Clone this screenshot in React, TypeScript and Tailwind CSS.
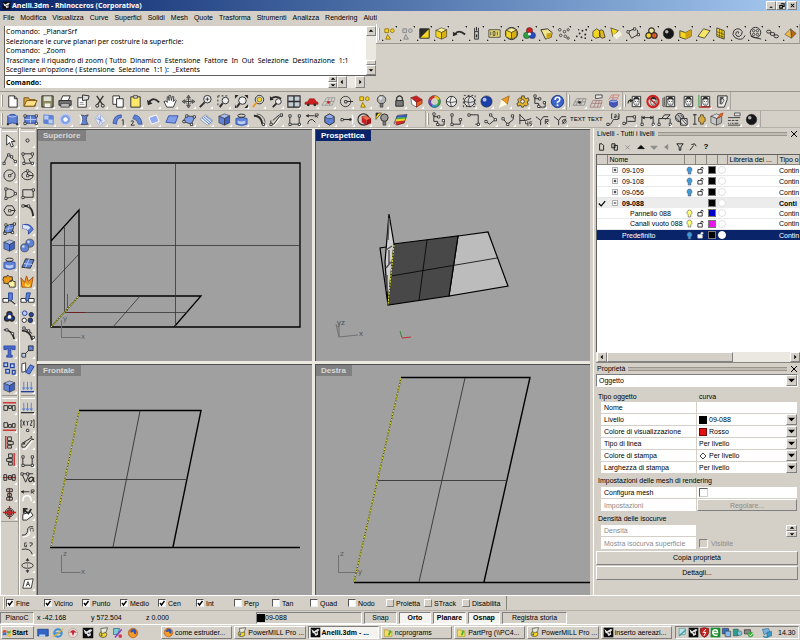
import { useState } from 'react';

type Shape = { d: string; fill: string; stroke: string; w: number };

const K = '#2b2b2b';
const G = '#8a8a8a';
const B = '#5f82d4';
const L = '#bccdf3';
const D = '#24429c';
const Y = '#f4d51f';
const O = '#f09a1c';
const R = '#cc2020';
const W = '#ffffff';

const s = (d: string, stroke = K, w = 1): Shape => ({ d, fill: 'none', stroke, w });
const f = (d: string, fill = K, stroke = 'none', w = 1): Shape => ({ d, fill, stroke, w });
const box = (x: number, y: number, w: number, h: number) => `M${x} ${y}h${w}v${h}h${-w}z`;
const circ = (x: number, y: number, r: number, ry = r) =>
  `M${x - r} ${y}a${r} ${ry} 0 1 0 ${2 * r} 0a${r} ${ry} 0 1 0 ${-2 * r} 0z`;
const nodes = (...p: number[][]) => f(p.map(([x, y]) => box(x - 1, y - 1, 2.4, 2.4)).join(''), W, K, 0.9);
const ball = (x: number, y: number, r: number, c: string) => [
  f(circ(x, y, r), c, K, 0.6),
  f(circ(x - r / 3, y - r / 3, r / 3), '#ffffffb0'),
];
const cube = (top: string, left: string, right: string) => [
  f('M2 4.500L8 2l5.500 2L8 7z', top, K, 0.6),
  f('M2 4.500L8 7v7l-6-2.500z', left, K, 0.6),
  f('M8 7l5.500-3v7.500L8 14z', right, K, 0.6),
];
const face = (bg = W) => [
  f(box(4.5, 2.5, 9, 11), bg, K, 1),
  f(circ(9, 8.5, 3, 4), '#f4f4f4', K, 0.7),
  f('M5.500 7q0-4 3.500-4t3.500 4l-1.500-1.500H7z'),
  s('M7.300 8h1.200M9.800 8h1.200M8 10.800h2', K, 0.8),
];
const tag = f('M7 1l7 0v3l-7 1z', '#e8e8e8', K, 0.8);

const icons: Record<string, Shape[]> = {
  // files and view
  new: [f('M4 2h6l3 3v9H4z', W, K), s('M10 2v3h3')],
  open: [f('M1 4h5l1 2h6v7H1z', '#d9a441', '#7a5510'), f('M1 13l3-6h11l-3 6z', '#ffe08a', '#7a5510')],
  save: [f(box(2, 2, 12, 12), '#88885a', K), f(box(4, 2.5, 8, 5), '#dcdcd0'), f(box(5, 10, 6, 4), '#eee')],
  print: [f('M5 2h8l-2 5H3z', W, K), f('M1 7h13v5H1z', '#777', K), f('M3 10h9v4H3z', '#bbb', K, 0.7)],
  props: [f(box(2, 4, 9, 10), W, K), f('M7 1l7 1-1 4-6 1z', '#ddd', K), s('M4 9h4M4 11h5', G)],
  cut: [s('M4 2l6 9M11 2L5 11', K, 1.3), s(circ(4.5, 12.5, 1.6)), s(circ(10.5, 12.5, 1.6))],
  copy: [f(box(2, 2, 7, 9), W, K), f(box(6, 5, 7, 9), W, K)],
  paste: [f(box(3, 3, 10, 11), '#fbe96a', K), f(box(6, 1.5, 4, 3), '#ccc', K, 0.7)],
  undo: [s('M3 9q5-7 11 0', K, 2), f('M1 6l1 6 5-2z')],
  pan: [f('M4 14L1 8l2-.5 1.500 1.500V3l1.500 0 .5 4V1.500h1.500L9 7l1-4.500 1.500.5-.5 5 2-2 1 1-3 7z', W, K, 0.9)],
  rotate: [s('M8 3v10M3 8h10', K, 0.9), f('M8 1l2 3H6zM8 15l2-3H6zM1 8l3-2v4zM15 8l-3-2v4z', '#777', K, 0.6), s(circ(8, 8, 3, 3), '#666', 0.9)],
  zoom: [f(circ(10, 5.5, 4), '#eee', K), s('M7 9l-5 5', K, 2), s('M8 5.500h4M10 3.500v4', K, 0.9)],
  zoomWin: [s('M2 2h2m2 0h2m2 0h2M2 2v2m0 2v2m0 2v2m2 0h2', K), f(circ(10, 7, 3.5), '#eee', K), s('M7 10l-3 4', K, 2)],
  zoomExt: [f(circ(9, 7, 4), '#eee', K), s('M6 10l-3 4', K, 2), f('M1 1h4L1 5zM15 1v4l-4-4zM15 15h-4l4-4zM1 15v-4l2 4z')],
  zoomSel: [f(circ(9, 6, 4.5), '#ddd', K), f(circ(9, 6, 2.5), Y, K, 0.5), s('M6 9l-4 5', O, 2)],
  zoomBack: [s('M2 5q5-4 11 0', K, 1.7), f('M1 2v5l4-1z'), f(circ(10, 8, 3), '#eee', K), s('M8 10l-4 4', K, 1.8)],
  four: [f(box(2, 2, 13, 12), '#c4ccd4', K, 1.2), s('M8.500 2v12M2 8h13', K, 1.4)],
  car: [f('M1 9l3-1 2-3h5l2 3 2 1v2H1z', R, '#801010', 0.5), f(circ(4.5, 11.5, 1.5) + circ(11.5, 11.5, 1.5))],
  cplane: [s('M1 12l5-8h9l-3 8zM4 8h10M5 12l4-8M9 12l3-8', G, 0.7), f(circ(8, 9, 1.5), R)],
  target: [s(circ(7, 8, 5.5), K, 0.9), s('M7 8h8'), f(box(6, 7, 2.5, 2.5), W, K)],
  select: [f(circ(11, 5, 2) + box(3, 3, 4, 4) + 'M6 9l3 5H4z', Y, '#9a7a10')],
  bulb: [f(circ(8, 6, 4.5), '#b4b4b4', '#444'), f(circ(7, 4.5, 1.5), '#e8e8e8'), f(box(6.5, 10, 3, 4), '#777', K, 0.6)],
  bulbOn: [f(circ(10, 6, 4), '#999', K), f(box(8.5, 10, 3, 4), '#777', K, 0.6), f('M1 1h6L1 8z', Y, K, 0.6), f('M1 1h3L1 5z')],
  lock: [s('M5 7V4q3-4 6 0v3', K, 1.3), f(box(4, 7, 8, 6), '#777', K)],
  material: [f('M2 4l6-2 6 4-6 3z', R, '#701010', 0.6), f('M2 4l6 5v5l-5-3z', '#fff', K, 0.6), f('M8 9l6-3v4l-6 4z', '#e86020', '#701010', 0.6)],
  wheel: [
    s('M8 3a5 5 0 0 1 4.500 3', '#e2c21a', 2.8),
    s('M12.500 6a5 5 0 0 1-2 6.500', '#38a838', 2.8),
    s('M10.500 12.500a5 5 0 0 1-5 0', '#2c9acb', 2.8),
    s('M5.500 12.500a5 5 0 0 1-2-6.500', '#7040c0', 2.8),
    s('M3.500 6a5 5 0 0 1 4.500-3', '#dd2828', 2.8),
    s(circ(8, 8, 6.4), K, 0.5),
  ],
  shade: [f(circ(8, 8, 5.5), '#eee', K), s('M8 2.500q-3 5 0 11M2.500 8q6 2 11 0', K, 0.8)],
  shadeSel: [s('M2 1.500h2m2 0h2m2 0h2m2 0v2m0 2v2m0 2v2m0 2h-2m-2 0h-2m-2 0h-2M1.500 14v-2m0-2v-2m0-2v-2', K, 0.9), f(circ(8, 8, 5.5), '#ddd', K), s('M8 2.500q-3 5 0 11M2.500 8q6 2 11 0', K, 0.8)],
  render: ball(8, 8, 6, '#1b3fa8'),
  spot: [f('M13 2l-2 9-6-5z', O, '#8a5510', 0.7), f('M5 6l6 5-9 4z', '#fffbe0')],
  gear: [f('M7 2h3v2l2 1 2-1 1 3-2 1 1 3-2 2-2-1-1 2H7l-1-2-3 1-1-3 2-1-1-3 2-2 2 1z', '#e5b32c', K, 0.8), f(circ(8, 8, 2), '#eee', K, 0.8)],
  dim: [s('M3 2v8h4M3 5h5M7 10v4h7V9', K), nodes([3, 2], [8, 5], [7, 13], [13, 9])],
  help: [f(circ(8, 8, 6.5), '#3c64cc', '#17307c'), s('M5.500 6.500q0-3 2.500-3t2.500 2.300q0 1.500-2.500 3v1', W, 1.7), f(circ(8, 12, 1.1), W)],
  grid: [s('M1 12l4-7h10l-2 7zM3 8.500h11M4 12l4-7M9 12l3-7', '#777', 0.7), f(circ(8, 9, 1.5), K)],
  gridTag: [s('M1 14l3-7h10l-2 7zM3 10h11M5 14l3-7M9 14l2-7', '#966', 0.7), tag],
  pot: [s('M3 6l3-5h8l-3 6M5 4h7M8 1L7 6', '#c66', 0.7), f('M4 8h8v4q-4 4-8 0z', '#4c55b8', D), f(circ(8, 8, 4, 1.5), '#99a8e8', D, 0.7)],
  faceUndo: [...face(), s('M0 10q0-4 4-3', K, 1.2), f('M2 5l4 2-4 2z')],
  faceStop: [...face().slice(1), s(circ(8.5, 8, 6), '#cf2020', 2.2), s('M4 4l9 8', '#cf2020', 1.6)],
  faceCopy: [s('M1 4v9h3M2.500 3v9', K, 0.8), ...face('#ddd')],
  face: face(),
  faceAxis: [...face(), s('M2 1v13', '#2c9a3c', 1), s('M2 14h13', R, 1.2)],
  faceCut: [f('M4 2h10v4l-3 8H4z', '#eee', K), f('M6 3h5L8 6v5H6z', '#555'), s('M8 5q4 0 2 3l-2 3', K, 0.9)],
  // surfaces
  srfPatch: [f('M3 4q5-3 10 0v9q-5-3-10 0z', B, D), s('M3 4q5 3 10 0', L), f(box(2, 12, 2, 2) + box(12, 12, 2, 2))],
  srfRect: [f(box(2, 4, 12, 8), B, D), s('M8 4v8M2 8h12', L), nodes([2, 4], [14, 4], [2, 12], [14, 12])],
  srfLoft: [f('M3 3l10 1v9L3 12z', L, B), f('M8 3l5 1v4H8zM3 8h5v5l-5-1z', B)],
  srfBall: [f(circ(8, 8, 5.8), '#8ea8ea', '#c4d2f5'), f(circ(8, 8, 3), W, B)],
  srfSweep: [f('M5 3q4 2 8 0-4 5 0 10-5 1-9 0 5-5 1-10z', B, K, 0.7), s('M4 3q4 5 0 10', W, 1.5)],
  srfFan: [f('M2 7l5-5 7 7-7 6z', '#e4e9f6', '#93a6dc', 0.6), s('M5 5l5 7M3 7l7 2M8 4l-1 9', B, 0.7)],
  srfOne: [f('M2 12Q3 3 11 3v3Q6 6 6 13z', B, D, 0.7), s('M11.500 9l1.500-1v6', K)],
  srfTwo: [f('M6 3q7 1 8 10h-4Q9 8 4 7z', B, D, 0.7), s('M2 10q4-2 2 2l-2 2h4', K)],
  srfPlane: [f('M3 6l8-3 3 7-8 3z', '#93abee', W)],
  srfPlane2: [f('M2 11l3-7 10 0-3 8z', '#7f9de8', D, 0.8)],
  srfPts: [f('M2 10l4-6 9 1-4 8z', '#7f9de8', K, 0.8), nodes([3, 10], [6, 4], [14, 5], [11, 13])],
  srfHatch: [f('M1 8l6-5 8 6-6 5z', '#dfe6f8', G, 0.7), s('M3 6l8 7M5 5l8 7M7 4l7 6', B, 1)],
  cube: cube('#a9bff2', B, '#3f62c0'),
  cyl: [f('M2 7q6-3 12 0v6q-6 3-12 0z', B, D, 0.7), f('M4 9q4 2 8 0v3q-4 2-8 0z', L), s(circ(8, 4, 4, 1.8), K)],
  arc: [s('M2 4q8 0 9 9', K, 2), s('M5 2q8 1 9 9', K, 0.7), nodes([12, 13])],
  dimSlope: [s('M3 14h3l7-9h2', W, 1), s('M2 13h3l6-8h3M2 13V9M14 5V2M4 9l7-6'), nodes([2, 13], [13, 3])],
  dimH: [s('M3 3v10h10V3', K, 1), nodes([3, 4], [13, 4], [3, 13], [13, 13])],
  dimR: [s('M1 4h9M3 13q0-5 5-5l3 3', K), s('M11 6V2h3v2h-3l3 2', K, 0.8), f('M1 4l3-2v4z')],
  hex: [f('M8 2l5 3v6l-5 3-5-3V5z', B, K), f('M8 2l5 3-3 2H6L3 5z', '#94abee', K, 0.6)],
  line: [s('M1 8h11', K, 1.2), s('M13 3q2 5 0 10', W, 1.2), nodes([2, 8]), f(circ(11, 8, 1.4))],
  redBox: [s(circ(7, 8, 6), K, 1.2), f('M5 5l5-1 5 3-5 2z', '#ee7050', '#801010', 0.5), f('M5 5v6l5 3V9z', R), f('M10 9l5-2v5l-5 2z', '#a01515')],
  rainbow: [
    f('M4 4l11-1-1 3-11 0z', '#3a50d0'),
    f('M3.500 6L14.500 5l-1 3-11 0z', '#3eb04a'),
    f('M3 8l11-1-1 3-11 0z', '#f0d820'),
    f('M2 10l11-1-1 3-8 2z', '#d12d2d'),
    s('M5 3.500l10-1-3 9-8 2.500-3-2z', K, 0.6),
  ],
  // annotations
  dimL: [s('M3 2v11h9V8', K), nodes([3, 3], [12, 8], [3, 13])],
  dimU: [s('M3 3h10v10M3 3v2M13 13h-3', K), nodes([3, 3], [13, 13])],
  ang1: [s('M3 10l4 3 6-5-5-5', K), nodes([3, 10], [8, 3], [13, 8])],
  ang2: [s('M2 7l5 6 6-5V3', K), nodes([2, 7], [7, 13], [12, 4])],
  ang45: [s('M2 2v11M2 3l6 6 6-2M2 9h6', K), s('M8 10v2.500h3M10.500 10v5M15 10.500h-2.500v2h2v2h-2', K, 0.8)],
  rad: [s('M1 5l5 4 3-4h5M6 9v5', K), s('M11 13V8h3v2h-3l3 3', K, 0.9)],
  diam: [s('M1 5l5 4 3-4h5M6 9v5', K), s(circ(12, 10, 2) + 'M10 13l4-6', K, 0.9)],
  note: [s('M2 13h4l3-5h5V4M8 2H7v5h1M10 3h2v2h-2v1h2M14 2h1v5h-1', K, 0.9), nodes([3, 13])],
  leader: [s('M2 12h3V5h9v5H6', K), nodes([2, 12], [13, 5])],
  dimHor: [s('M2 4v9M14 4v9M2 6h12', K), f('M2 6l3-2v4zM14 6l-3-2v4z'), nodes([2, 13], [14, 13])],
  dimZ: [s('M2 13V7h11M5 7l3-4h6l-5 5M14 7v6', K), nodes([2, 13], [14, 13])],
  hatch: [f(circ(6, 6, 4.5), '#bbb', K), f(box(7, 7, 7, 7), '#ddd', K), s('M2 6l7 7M4 3l9 10M7 3l6 7', K, 0.8)],
  dimGear: [s('M3 2v11M1 3h4M1 13h4'), f('M9 3h3v2l2 1v4l-2 1v2H9v-2L7 10V6l2-1z', '#d8a93c', K, 0.7)],
  cubeArrow: [...cube('#ddd', '#c8c8c8', '#b4b4b4'), f('M9 7l3-5 3-1-1 3z', '#f06a20', '#a03a10', 0.7)],
  lines: [s('M1 6h13M1 9h3m1 0h3m1 0h3M1 12h1m1 0h1m1 0h2m1 0h4M1 14h13', K, 0.9), f('M8 1h6v3H8z', '#ddd', K, 0.7)],
  black: ball(8, 8, 5.6, '#161616'),
  // selection
  selGray: [f(circ(11, 5, 2) + box(3, 3, 4, 4) + 'M6 9l3 5H4z', '#c4c4c4', G)],
  invert: [f(box(3, 3, 10, 10), Y, K), f('M3 3h10L3 13z', K)],
  yellowCube: cube('#fff28a', Y, '#d8b010'),
  last: [s('M3 9q4-6 11 0', K, 2), f('M1 6v5l5-2z')],
  tower: [f(box(6, 6, 4, 8), '#ccc', K), s('M6 2v4M10 2v4M8 1v4'), s('M8 9v3', K, 1.5)],
  id: [f(box(2, 4, 12, 8), '#eadd78', K, 0.8), s('M4 6v4M6.500 6v4h2V6zM11 6v4', K, 0.8)],
  selCube: [s(circ(8, 8, 6.5), K), ...cube('#fff28a', Y, '#d8b010')],
  rgb: [f(circ(8, 5, 3.4), R, K, 0.5), f(circ(5, 10, 3.4), '#2fa143', K, 0.5), f(circ(11, 10, 3.4), '#2848c4', K, 0.5), f(circ(8, 8.5, 1.6), W)],
  yPoly: [f('M2 4l7-1 5 4-1 5-6 2z', '#efe58e', K), f('M8 8l6-1-1 5-5 2z', '#c9a51c')],
  dots: [s(circ(4, 4, 1.4) + circ(9, 6, 1.4) + circ(13, 4, 1.2) + circ(5, 10, 1.4) + circ(10, 11, 1.4) + circ(13, 13, 1.2), K, 0.8)],
  points: [f(circ(3, 11, 1) + circ(6, 8, 1) + circ(8, 12, 1) + circ(9, 5, 1) + circ(12, 9, 1.1) + circ(13, 4, 1) + circ(5, 4, 0.8) + circ(12, 13, 0.9))],
  solids: [f('M2 6l4-3 3 2v7l-4 1-3-2z', Y, K, 0.8), f('M9 5q2-2 4 0l2 7q-3 2-5 0z', '#dfb81c', K, 0.8)],
  light: [f('M2 2l8 3-6 6z', Y, K, 0.7), f('M11 5l3 4-6 5-4-4z', '#f4f2de')],
  chain: [s('M2 6l7-3M2 6l4 7 7-4-1-5'), nodes([2, 6], [9, 3], [13, 9])],
  group: [f(circ(8, 5, 3), '#eee8a0', K, 1.2), f(circ(5, 10, 3), Y, K, 1.2), f(circ(11, 10, 3), '#e05a20', K, 1.2)],
  poly: [f('M2 5l6 2 6-3v7l-6 3-6-2z', Y, K, 0.8), f('M8 7l6-3v7l-6 3z', '#cf9f18')],
  ySrf: [f('M2 11l6-8 7 2-6 8z', '#f6e768', K, 0.8)],
  yMesh: [f('M4 2l8 3v9l-8-3z', Y, K, 0.8), s('M4 6l8 3M7 3v9M4 9l8 3M9.500 4v9', K, 0.6)],
  spiral: [s('M8 8q1-2-1-2t-2 3q1 3 4 2t3-5Q10 2 6 3T2 9q1 4 6 5t7-4', K, 1)],
  reel: [s(circ(8, 7, 5.6)), s(circ(6, 5, 1.3) + circ(10, 5, 1.3) + circ(6, 9, 1.3) + circ(10, 9, 1.3), K, 0.8), s('M3 11l11 3')],
  links: [s(circ(4, 6, 2.3, 1.6) + circ(8, 8.5, 2.5, 1.6) + circ(12, 11, 2.4, 1.6), K, 1)],
  pyramid: [f('M8 3l6 5-5 5z', '#b86a10', K, 0.5), f('M8 3L2 9l7 4z', '#f0b848', K, 0.5)],
  // side bars
  pointer: [f('M5 2v11l3-3 2 5 2-1-2-5h4z', W, K)],
  point: [s(circ(8, 8, 1.7), K, 1)],
  polyline: [s('M2 13l5-10 7 8'), nodes([2, 13], [7, 4], [10, 6], [14, 11])],
  curve: [s('M4 3h9q1 5-2 5t1 5H4q2-3 0-5t0-5'), nodes([3, 3], [13, 3], [4, 13], [13, 13])],
  circle: [s(circ(8, 8, 6)), s('M8 8l4-3'), nodes([8, 8])],
  ellipse: [s(circ(8, 8, 6, 4.5)), s('M8 3v5h6'), nodes([8, 8], [8, 3])],
  arcPts: [s('M4 3q9 0 10 5-1 4-10 5M4 3v10'), nodes([4, 3], [4, 13], [14, 8])],
  rect: [s(box(3, 4, 11, 8)), nodes([3, 12], [14, 4])],
  polygon: [s('M5 3h6l3 5-3 5H5L2 8z'), s('M8 8h6'), nodes([8, 8])],
  fillet: [s('M3 3q10-1 11 11', K, 2), nodes([3, 3], [9, 3])],
  ptSrf: [f('M4 5l9-2-2 9-9 1z', B, K), s('M8 4L6 12M3 9l9-2', L, 0.8), nodes([4, 4], [13, 3], [11, 12], [3, 13])],
  curved: [f('M3 4q8-2 11 5l-5 5q1-6-6-6z', B, D), f('M3 4q5 0 8 3l-3 3Q7 8 3 8z', '#dfe6fa')],
  spheres: [...ball(10.5, 5.5, 4.3, B), ...ball(5, 10.5, 4.3, B)],
  mesh: [f('M2 12l4-9 9 1-4 9z', B, K), s('M4 8l9 1M10 3l-4 9', L)],
  puzzle: [f('M2 3h3l1-2 2 2h3v4H9l-1 3H2V8L1 6z', O, K, 0.9), f('M8 8h2l1-2 1 2h2v6H8v-2l-2-1z', '#fff3a8', K, 0.9)],
  explode: [f('M2 14L1 4l4 5 2-7 2 6 5-5-2 11z', O, '#a85210'), f('M5 13l1-4 2 3 3-2-1 4z', '#ffe14d')],
  trim: [f('M1 8h6v4H1z', W, K), f('M7 2h4v7l-2 2-2-2z', B, D), s('M9 10l5 4', K, 1.3)],
  split: [f(box(1, 8, 6, 4) + box(9, 8, 6, 4), W, K), f('M7 2h4l-2 8H6z', B, D)],
  group3: [f(circ(8, 5.5, 2.6) + circ(5.5, 10, 2.6) + circ(10.5, 10, 2.6), D, K, 1.8), f(circ(8, 8.5, 2), W)],
  ungroup: [f(circ(5, 4.5, 2.5), L, D), f(circ(12, 6, 2.3), D, K), f(circ(4.5, 12, 2.3), W, K), f(circ(11, 12, 2.4), D, K)],
  ctrl: [s('M2 4q9 0 11 10', K, 1.8), nodes([5, 4], [11, 8])],
  ctrl2: [s('M2 5q9 0 11 10', K, 1.8), s('M4 2l9 6'), nodes([4, 2], [9, 5], [14, 12])],
  text: [f('M2 2h12v4h-3V5H9.500v7H11v2H5v-2h1.500V5H5v1H2z', '#4868cc', D, 0.8)],
  boxes: [s('M4 12l8-8'), f(box(9, 2, 5, 5), B, K, 0.9), f(box(2, 10, 4, 4), L, K, 0.9)],
  array: [f(box(2, 2, 4, 4) + box(9, 3, 4, 4) + box(4, 9, 4, 4) + box(11, 10, 3, 4), L, D, 1.3)],
  angled: [f('M6 12l5-8 4 2-5 8z', B, D), f('M2 3l4-1v9l-4 1z', W, K, 0.9)],
  blueCube: cube('#9db5f0', B, '#4062bd'),
  waves: [s('M4 3v7M8 3v7M12 3v7', B), f('M2 9h4l-2 3zM6 9h4l-2 3zM10 9h4l-2 3z', B), s('M1 13.500h14', D, 1.5)],
  alTop: [s('M1 3h14', R, 1.4), s(box(2, 6, 4, 5) + box(7, 6, 3, 3) + box(11, 6, 3, 5))],
  alBot: [s('M1 13h14', R, 1.4), s(box(2, 5, 4, 5) + box(7, 7, 3, 3) + box(11, 6, 3, 4))],
  alLeft: [s('M4 1v14', R, 1.4), s(box(6, 2, 4, 4) + box(6, 7, 6, 3) + box(6, 11, 4, 3))],
  alRight: [s('M13 1v14', R, 1.4), s(box(7, 2, 4, 4) + box(5, 7, 6, 3) + box(7, 11, 4, 3))],
  alHor: [s('M1 8h14', R, 1.4), s(box(2, 5, 3, 6) + box(7, 6, 3, 4) + box(11, 5, 3, 6))],
  alVer: [s('M8 1v14', R, 1.4), s(box(5, 2, 6, 3) + box(6, 7, 4, 3) + box(5, 11, 6, 3))],
  alCen: [s(circ(8, 8, 4.5), K), f(circ(8, 8, 3), '#b04040', K), s('M8 1v14M1 8h14', R, 1.4)],
  wave: [s('M4 3v7M8 3v7M12 3v7', B), f('M2 9h4l-2 3zM6 9h4l-2 3zM10 9h4l-2 3z', B), s('M1 13.500h14', K, 1.3)],
  xyz: [s('M2 2H1v8h1M14 2h1v8h-1M3 3l2 5M5 3L3 8M7 3l1 2 1-2M8 5v3M11 3h2l-2 5h2', K, 0.9), nodes([8, 13])],
  slope: [s('M3 15h3l7-9h2', W, 1.2), s('M2 13V9l10-6V1M2 13h3l7-8h3M12 3l2 2'), f('M2 10l4-3-1 3z')],
  alpha: [s('M2 4h12M2 4l4 9 4-9', K), nodes([2, 4], [8, 4]), s('M15 8q-3 6-5 4t1-4 4 5', K, 1.3)],
  radius: [s('M1 4h9', K), f('M1 4l3-2v4z'), s('M3 14q0-6 5-6 4 1 4 6', W, 1.5), s('M12 6V2h3v2h-3l3 2', K, 0.8)],
  flip: [f('M3 9l8-3 3 4-7 5-4 0z', W, K), s('M4 4l5 4 3-5M4 8V3h4', K, 1.8)],
  offset: [s('M3 15q7-1 7-5t5-3', W, 1.3), s('M2 13q6 0 6-5t6-4', K), s('M11 9V6h3v3', K, 0.8)],
  g2: [s('M2 9q9-2 11 5', K), s('M7 2H5v4h2V4M10 2h3v2l-2 1v1', K, 0.9)],
  spin: [s(circ(8, 8, 6, 3)), s('M8 1v14', G), f('M8 0l2 3H6zM8 16l2-3H6z')],
  area: [f('M3 13l2-9 9-1-2 10z', W, K, 0.9), s('M6.500 11l2-5 2 5M7.500 9h2', K, 0.9)],
  // taskbar
  windows: [f('M1 5q3-3 6-1v4Q4 6 1 8z', '#e04a2a'), f('M8 4q3 2 6 0v4q-3 2-6 0z', '#5cae3c'), f('M1 9q3-3 6-1v4q-3-2-6 0z', '#3a6fd8'), f('M8 9q3 2 6 0v4q-3 2-6 0z', '#f0c020')],
  desktop: [f(box(1, 3, 14, 9), '#2f66c8', '#1b3d80'), f(box(3, 10, 8, 3), '#bfd6f4')],
  ie: [s(circ(8, 8, 5), '#3b8ed8', 2.6), s('M4 8h8', '#3b8ed8', 2), s('M1 13Q8 10 15 2', '#e8b020', 1.5)],
  outlook: [f(circ(8, 8, 6), '#e9dede', '#b98'), f('M3 8q5-8 10 0l-3-1-2 5-2-5z', '#c02a3a')],
  rhino: [f(box(1, 1, 14, 14), '#0c0c0c'), f('M2 3l4 3 5-3 3 1-3 3 1 4-4 2-2-4-2 0z', '#e6e6e6'), f('M7 8l3-1v3z')],
  mill: [f(circ(8, 10, 5, 4), Y, K, 0.8), f('M5 2l9-1-2 6-6 2z', '#e8e8d8', K, 0.8), f(circ(6, 11, 1.4), '#3a62b8')],
  paint: [f('M2 2h8l-2 8H2z', '#7cc', D, 0.8), s('M4 14L13 3', '#8a3fc0', 2), f(circ(11, 12, 2.5), '#d5395a')],
  firefox: [f(circ(8, 8, 6.3), '#e87a1c', '#a3440c', 0.7), f(circ(8.5, 6.5, 3.8), '#2e57b5'), f('M2 7q4 1 7-1-1 4 4 4-3 5-8 3z', '#f39c26')],
  folder: [f('M2 4h5l1 2h5v8H2z', '#f2dc66', '#a58b20', 0.8), f('M7 12l3-8 3 4h-2l-1 4z', '#48b02c')],
  shield: [f('M2 2l6-1 6 1v6q-1 5-6 7-5-2-6-7z', R, '#5a0c0c'), s('M10 3L6 8h4l-3 5', W, 1.4)],
  green: [f(box(1, 1, 14, 14), '#15902b'), s('M5 8h6q0-4-3-4-4 0-4 4t4 4h3', W, 2)],
  net: [f(box(2, 2, 9, 8), '#356fc8', K, 0.8), f(box(6, 6, 8, 8), '#86b8e8', K, 0.8)],
  teal: [f(box(2, 3, 7, 10), '#2f9f90', K, 0.6), f(circ(11, 9, 3.5), '#79c8de', K, 0.6)],
  usb: [f(box(2, 4, 9, 6), '#888', K), f(circ(11, 11, 4), '#3fa83c'), s('M9 11l2 2 3-4', W, 1.3)],
  sync: [f('M2 3l8-1 2 5-8 3z', '#78b4e0', '#2a6090', 0.8), f('M8 7l6-1v6l-6 1z', '#3a9ac8', '#2a6090', 0.8), s('M3 12q4 3 7 1', '#2a8ea8', 2)],
  msg: [f('M3 2h9v9H3z', '#bfe0e0', '#488', 0.8), s('M3 13l10-9', '#3aa0b0', 2)],
};

function Icon({ name, className = 'size-4' }: { name: string; className?: string }) {
  return (
    <svg viewBox="0 0 16 16" className={`shrink-0 ${className}`} aria-hidden="true">
      {(icons[name] ?? []).map((p, i) => (
        <path key={i} d={p.d} fill={p.fill} stroke={p.stroke} strokeWidth={p.w} />
      ))}
    </svg>
  );
}

function ToolButton({ name, marks = false }: { name: string; marks?: boolean }) {
  return (
    <button type="button" aria-label={name} className="flex min-h-0 min-w-0 flex-1 items-center justify-center">
      {name === 'TEXT' ? (
        <span className="font-['Liberation_Sans'] text-[6px]">TEXT</span>
      ) : (
        <svg viewBox="0 0 16 16" className="size-[15px] shrink-0 overflow-visible" aria-hidden="true">
          {(icons[name] ?? []).map((p, i) => (
            <path key={i} d={p.d} fill={p.fill} stroke={p.stroke} strokeWidth={p.w} />
          ))}
          {marks ? <path d="M0 14v2h2zM14 0h2v2z" fill="#222" /> : <path d="M16 13v3h-3z" fill="#fff" />}
        </svg>
      )}
    </button>
  );
}

const rowMain = 'new open save print props cut copy paste undo pan rotate zoom zoomWin zoomExt zoomSel zoomBack four car cplane target select bulb lock material wheel shade shadeSel render spot gear dim help'.split(' ');
const rowGrid = 'grid gridTag pot'.split(' ');
const rowFaces = 'faceUndo faceStop faceCopy face faceAxis faceCut'.split(' ');
const rowSurf = 'srfPatch srfRect srfLoft srfBall srfSweep srfFan srfOne srfTwo srfPlane srfPlane2 srfPts srfHatch cube cyl arc dimSlope dimH dimR hex line redBox bulbOn rainbow'.split(' ');
const rowDims = 'dim dimL dimU ang1 ang2 ang45 rad diam TEXT TEXT note leader dimHor dimZ hatch dimGear cubeArrow lines black'.split(' ');
const rowSelect = 'select selGray invert yellowCube last tower id selCube rgb yPoly dots points solids light chain group black poly ySrf yMesh spiral reel links pyramid'.split(' ');
const sideA = 'pointer polyline circle arcPts polygon ptSrf cube cyl puzzle trim group3 ctrl text array blueCube'.split(' ');
const sideB = 'point curve ellipse rect fillet curved spheres mesh explode split ungroup ctrl2 boxes angled waves'.split(' ');
const sideC = 'alTop alBot alLeft alRight alHor alVer alCen'.split(' ');
const sideD = 'wave xyz slope dimH alpha radius flip offset g2 spin area'.split(' ');

const raised = 'border border-t-white border-l-white border-r-[#808080] border-b-[#808080] bg-[#d4d0c8]';
const sunken = 'border border-t-[#808080] border-l-[#808080] border-r-white border-b-white';

function Grip() {
  return <span className="mx-px h-3 w-[2px] shrink-0 border-l border-r border-l-white border-r-[#9a968e]" />;
}

function Bar({ items, className, marks = false }: { items: string[]; className: string; marks?: boolean }) {
  return (
    <div role="toolbar" className={`flex h-full items-center border-r border-[#aaa69e] ${className}`}>
      <Grip />
      {items.map((name, i) => (
        <ToolButton key={i} name={name} marks={marks} />
      ))}
    </div>
  );
}

function Arrow({ dir, className = '' }: { dir: 'up' | 'down' | 'left' | 'right'; className?: string }) {
  const d = { up: 'M1 5l3-3 3 3z', down: 'M1 3l3 3 3-3z', left: 'M5 1L2 4l3 3z', right: 'M3 1l3 3-3 3z' }[dir];
  return (
    <button type="button" aria-label={dir} className={`flex items-center justify-center ${raised} ${className}`}>
      <svg viewBox="0 0 8 8" className="size-[6px] shrink-0"><path d={d} /></svg>
    </button>
  );
}

const menus = ['File', 'Modifica', 'Visualizza', 'Curve', 'Superfici', 'Solidi', 'Mesh', 'Quote', 'Trasforma', 'Strumenti', 'Analizza', 'Rendering', 'Aiuti'];

function TitleBar() {
  return (
    <header className="flex h-[11px] items-center bg-linear-to-r from-[#0a246a] to-[#a6caf0] pr-[3px] pl-[2px] text-white">
      <Icon name="rhino" className="size-[9px]" />
      <h1 className="ml-px flex-1 font-['Noto_Sans'] text-[7px] font-bold">Anelli.3dm - Rhinoceros (Corporativa)</h1>
      <div className="flex text-black">
        {['M2 6h3', 'M3 2h4v3H5M2 4h3v3H2z', 'M2 2l4 4M6 2l-4 4'].map((d, i) => (
          <button key={d} type="button" aria-label={['Riduci', 'Ripristina', 'Chiudi'][i]} className={`flex h-[9px] w-[10px] items-center justify-center ${raised} ${i === 2 ? 'ml-px' : ''}`}>
            <svg viewBox="0 0 8 8" className="size-[7px] shrink-0"><path d={d} fill="none" stroke="#000" strokeWidth="1.2" /></svg>
          </button>
        ))}
      </div>
    </header>
  );
}

function CommandArea() {
  return (
    <section className="flex h-[67px]">
      <div className="flex w-[376px] flex-col pt-[2px] pl-[4px]">
        <div className="flex h-[50px] border-b border-l border-[#606060] bg-white">
          <div className="flex min-w-0 flex-1 flex-col justify-between py-px pl-px font-['Noto_Sans'] text-[7px] leading-[9px] whitespace-pre">
            <p>Comando:  _PlanarSrf</p>
            <p>Selezionare le curve planari per costruire la superficie:</p>
            <p>Comando:  _Zoom</p>
            <p>Trascinare il riquadro di zoom ( Tutto  Dinamico  Estensione  Fattore  In  Out  Selezione  Destinazione  1:1</p>
            <p>Scegliere un'opzione ( Estensione  Selezione  1:1 ):  _Extents</p>
          </div>
          <div className="flex w-[10px] flex-col bg-[#ebe8e2]">
            <Arrow dir="up" className="h-[10px]" />
            <span className="flex-1" />
            <span className={`h-[5px] ${raised}`} />
            <Arrow dir="down" className="h-[10px]" />
          </div>
        </div>
        <div className="flex h-[12px] items-center border-l border-[#606060] bg-white">
          <label htmlFor="cmd" className="pl-px font-['Noto_Sans'] text-[7px] font-bold">Comando:</label>
          <input id="cmd" className="min-w-0 flex-1 outline-none" />
          <span className="flex h-full w-[9px] flex-col">
            <Arrow dir="up" className="h-[6px]" />
            <Arrow dir="down" className="h-[6px]" />
          </span>
          <Arrow dir="left" className="h-full w-[10px]" />
          <span className="h-full w-[8px] bg-[#ebe8e2]" />
          <Arrow dir="right" className="h-full w-[10px]" />
          <span className="h-full w-[11px] bg-[#d4d0c8]" />
        </div>
      </div>
      <div className="h-[20px] flex-1 border-b border-[#9a968e]">
        <Bar items={rowSelect} marks className="border-l border-l-white" />
      </div>
    </section>
  );
}

function SideBars() {
  const col = 'flex w-[19px] flex-col border-r border-r-[#a09c94] border-l border-l-white';
  const rule = <span className="mx-px h-[4px] shrink-0 border-t border-b border-t-[#9a968e] border-b-white" />;
  return (
    <nav className="flex w-[37px] shrink-0">
      <div className={col}>
        {rule}
        <div className="flex h-[263px] flex-col">{sideA.map((n) => <ToolButton key={n} name={n} />)}</div>
        {rule}
        <div className="flex h-[123px] flex-col border-b border-[#a09c94]">{sideC.map((n) => <ToolButton key={n} name={n} />)}</div>
      </div>
      <div className={col}>
        {rule}
        <div className="flex h-[263px] flex-col">{sideB.map((n) => <ToolButton key={n} name={n} />)}</div>
        {rule}
        <div className="flex h-[193px] flex-col">{sideD.map((n) => <ToolButton key={n} name={n} />)}</div>
      </div>
    </nav>
  );
}

function Viewport({ title, viewBox, active = false, children }: { title: string; viewBox: string; active?: boolean; children: React.ReactNode }) {
  return (
    <section className="relative min-h-0 min-w-0 overflow-hidden border-t border-l border-[#505050] bg-[#a0a0a0]">
      <svg viewBox={viewBox} preserveAspectRatio="xMinYMin meet" className="block h-full w-full" fill="none" stroke="#000">
        {children}
      </svg>
      <h2 className={`absolute top-0 left-0 h-[11px] pr-[6px] pl-[5px] text-[8px] leading-[11px] font-bold ${active ? 'bg-[#0a246a] text-white' : 'bg-[#808080] text-[#d8d8d8]'}`}>
        {title}
      </h2>
    </section>
  );
}

function Edge({ d }: { d: string }) {
  return (
    <g>
      <path d={d} stroke="#4a4a18" strokeWidth="1.200" />
      <path d={d} stroke="#dede3c" strokeDasharray="2 1" />
    </g>
  );
}

function Axes({ x, y, up, side }: { x: number; y: number; up: string; side: string }) {
  return (
    <g stroke="#707070">
      <path d={`M${x + 0.5} ${y - 17}v17.500h19`} />
      <g stroke="none" fill="#606060" fontSize="8">
        <text x={x + 2} y={y - 16}>{up}</text>
        <text x={x + 20} y={y + 2}>{side}</text>
      </g>
    </g>
  );
}

function Viewports() {
  return (
    <main className="grid min-w-0 flex-1 grid-cols-2 grid-rows-2 gap-[3px] bg-[#ece9e2] pt-px">
      <Viewport title="Superiore" viewBox="38 130 274 230">
        <path d="M51 163H300V327H51zM51 241L79 210V296H201L174 327" strokeWidth="1.300" />
        <path d="M51 245.500H300M175.500 163V327M64.500 226V312.500H187M51 284L79 254M113 327L140 296" stroke="#333" strokeWidth="0.800" />
        <path d="M67.500 294v17" stroke="#2f7a2f" />
        <path d="M67 312.500h18" stroke="#6a2222" />
        <Edge d="M51 327L79 296" />
        <Axes x={61} y={337} up="y" side="x" />
      </Viewport>
      <Viewport title="Prospettica" viewBox="315 130 274 230" active>
        <path d="M457 236L487 232L507 286L448 296z" fill="#bcbcbc" strokeWidth="1.200" />
        <path d="M392 244L457 236L448 296L387 305z" fill="#484848" strokeWidth="1.200" />
        <path d="M390 276L496 258M426 240L418 300" strokeWidth="0.800" />
        <path d="M385 247L379 248L387 305" strokeWidth="1.200" />
        <path d="M388 214L393 244L387 305L384 262z" fill="#d0d0d0" strokeWidth="1.200" />
        <path d="M388 218L387 240M385 250L391 246M385 268L390 262M388 250v14M386 275v16" strokeWidth="1.500" stroke="#555" />
        <Edge d="M393 245L387 305" />
        <path d="M338 337L357 335M338 337V325M338 337L335 324" stroke="#707070" />
        <g stroke="none" fill="#505050" fontSize="8">
          <text x="336" y="325">yz</text>
          <text x="358" y="336">x</text>
        </g>
        <path d="M399 331L401 338" stroke="#2f8a2f" />
        <path d="M401 338L410 337" stroke="#c03030" />
      </Viewport>
      <Viewport title="Frontale" viewBox="38 365 274 230">
        <path d="M79 410.500H201L173 547M50 547.500H300" strokeWidth="1.400" />
        <path d="M65 479.500H187M140 411L113 547" stroke="#333" strokeWidth="0.900" />
        <Edge d="M79 411L51 547" />
        <Axes x={61} y={572} up="z" side="x" />
      </Viewport>
      <Viewport title="Destra" viewBox="316 365 274 230">
        <path d="M401 377.500H530L484 582M354 582.500H590" strokeWidth="1.400" />
        <path d="M378 480.500H507M465 378L419 582" stroke="#333" strokeWidth="0.900" />
        <Edge d="M401 378L354 582" />
        <Axes x={338} y={572} up="z" side="y" />
      </Viewport>
    </main>
  );
}

interface Layer {
  name: string;
  indent: string;
  sign?: string;
  bulb?: string;
  color: string;
  current?: boolean;
  selected?: boolean;
}

const layers: Layer[] = [
  { name: '09-109', indent: 'pl-[5px]', sign: '+', bulb: '#3d9bd8', color: '#000' },
  { name: '09-108', indent: 'pl-[5px]', sign: '+', bulb: '#3d9bd8', color: '#000' },
  { name: '09-056', indent: 'pl-[5px]', sign: '+', bulb: '#3d9bd8', color: '#000' },
  { name: '09-088', indent: 'pl-[5px]', sign: '−', color: '#000', current: true },
  { name: 'Pannello 088', indent: 'pl-[23px]', bulb: '#ffff70', color: '#0000c8' },
  { name: 'Canali vuoto 088', indent: 'pl-[23px]', bulb: '#ffff70', color: '#e815e8' },
  { name: 'Predefinito', indent: 'pl-[15px]', bulb: '#3d9bd8', color: '#000', selected: true },
];

function PanelTitle({ title }: { title: string }) {
  return (
    <div className="flex h-[11px] items-center gap-[3px] pr-[2px] pl-px leading-[11px]">
      <h2>{title}</h2>
      <span className="h-[4px] flex-1 border-t border-b border-[#9a968e] bg-[#c0bcb4]" />
      <button type="button" aria-label="Chiudi">
        <svg viewBox="0 0 8 8" className="size-[8px]"><path d="M1 1l6 6M7 1L1 7" stroke="#000" /></svg>
      </button>
    </div>
  );
}

function LayersPanel() {
  const tools = ['M2 1h3l2 2v6H2z', 'M1 1h4v5H1zM4 3h4v6H4z', 'M2 3l5 5M7 3L2 8', 'M1 7l4-4 4 4z', 'M1 4l4 4 4-4z', 'M6 2L2 5l4 3z', 'M1 1h8L6 5v4H4V5z', 'M1 9l5-6M3 2l4-1 2 3'];
  return (
    <section className="flex h-[234px] flex-col">
      <PanelTitle title="Livelli - Tutti i livelli" />
      <div className="flex h-[15px] items-center gap-[3px] pl-px">
        {tools.map((d, i) => (
          <button key={d} type="button" aria-label={`Livello ${i + 1}`} className="flex w-[10px] justify-center">
            <svg viewBox="0 0 10 10" className="size-[8px]">
              <path d={d} fill={i === 3 ? '#000' : i === 4 || i === 5 ? '#8a8a8a' : 'none'} stroke={i === 2 || i === 4 || i === 5 ? '#8a8a8a' : '#000'} />
            </svg>
          </button>
        ))}
        <button type="button" className="w-[10px] text-[8px] font-bold">?</button>
      </div>
      <div className="flex-1 overflow-hidden border-t border-l border-[#606060] bg-white">
        <table className="h-[85px] w-full table-fixed border-collapse leading-[9px] whitespace-nowrap">
          <colgroup>
            <col className="w-[10px]" />
            <col className="w-[77px]" />
            <col className="w-[11px]" />
            <col className="w-[11px]" />
            <col className="w-[11px]" />
            <col className="w-[10px]" />
            <col className="w-[50px]" />
            <col />
          </colgroup>
          <thead>
            <tr className="bg-[#d4d0c8]">
              {['', 'Nome', '', '', '', '', 'Libreria dei ...', 'Tipo o'].map((h, i) => (
                <th key={i} className="border-r border-b border-[#8a867e] p-0 pl-[2px] text-left font-normal">{h}</th>
              ))}
            </tr>
          </thead>
          <tbody>
            {layers.map((l) => (
              <tr key={l.name} className={l.selected ? 'bg-[#0a246a] text-white' : l.current ? 'bg-[#ececec] font-bold' : 'border-b border-[#e8e8e8]'}>
                <td className="p-0">
                  {l.current && <svg viewBox="0 0 10 8" className="mx-auto h-[7px] w-[8px]"><path d="M1 4l3 3 5-6" fill="none" stroke="#000" strokeWidth="1.500" /></svg>}
                </td>
                <td className={`p-0 ${l.indent}`}>
                  <span className="flex items-center gap-[4px]">
                    {l.sign && (
                      <svg viewBox="0 0 7 7" className="size-[6px] shrink-0">
                        <path d="M.5.5h6v6h-6z" fill="#fff" stroke="#999" />
                        <path d={l.sign === '+' ? 'M2 3.500h3M3.500 2v3' : 'M2 3.500h3'} stroke="#000" />
                      </svg>
                    )}
                    {l.name}
                  </span>
                </td>
                <td className="p-0">
                  {l.bulb && (
                    <svg viewBox="0 0 8 10" className="mx-auto h-[9px] w-[7px]">
                      <path d="M4 1a3 3 0 0 0-1.500 5.500V9h3V6.500A3 3 0 0 0 4 1z" fill={l.bulb} stroke="#557" strokeWidth="0.700" />
                    </svg>
                  )}
                </td>
                <td className="p-0">
                  {l.bulb && (
                    <svg viewBox="0 0 8 9" className="mx-auto h-[8px] w-[7px]">
                      <path d="M1 4h5v4H1zM4.500 4V2q1-1.500 2.500 0v1" fill={l.selected ? '#fff' : 'none'} stroke={l.selected ? '#ccc' : '#222'} />
                    </svg>
                  )}
                </td>
                <td className="p-0">
                  <span className="mx-auto block size-[8px] border border-[#777]" style={{ backgroundColor: l.color }} />
                </td>
                <td className="p-0">
                  <span className={`mx-auto block size-[8px] rounded-full border bg-white ${l.selected ? 'border-white' : 'border-[#e0e0e0]'}`} />
                </td>
                <td className="p-0" />
                <td className="p-0 pl-[2px]">{l.current ? 'Conti' : 'Contin'}</td>
              </tr>
            ))}
          </tbody>
        </table>
      </div>
      <div className="flex h-[10px] bg-[#ebe8e2] pl-px">
        <Arrow dir="left" className="w-[10px]" />
        <span className={`w-[126px] ${raised}`} />
        <span className="flex-1" />
        <Arrow dir="right" className="w-[10px]" />
      </div>
    </section>
  );
}

function Combo({ id, value, swatch, label }: { id: string; value: string; swatch?: React.ReactNode; label?: string }) {
  return (
    <div className="flex h-full items-center bg-white">
      {swatch}
      <select id={id} aria-label={label} className="h-full min-w-0 flex-1 appearance-none bg-transparent pl-[2px] outline-none">
        <option>{value}</option>
      </select>
      <span className={`pointer-events-none flex h-full w-[11px] items-center justify-center ${raised}`}>
        <svg viewBox="0 0 8 8" className="size-[7px] shrink-0"><path d="M0 2h8L4 6z" /></svg>
      </span>
    </div>
  );
}

const labelCell = 'flex w-[95px] shrink-0 items-center bg-white pl-[3px]';

function PropsPanel() {
  const [mesh, setMesh] = useState(false);
  const combos = [
    { id: 'livello', label: 'Livello', value: '09-088', swatch: <span className="ml-[2px] size-[8px] bg-black" /> },
    { id: 'colore', label: 'Colore di visualizzazione', value: 'Rosso', swatch: <span className="ml-[2px] size-[8px] border border-[#700] bg-[#e01010]" /> },
    { id: 'linea', label: 'Tipo di linea', value: 'Per livello' },
    { id: 'stampa', label: 'Colore di stampa', value: 'Per livello', swatch: <svg viewBox="0 0 8 8" className="ml-[2px] size-[8px]"><path d="M4 1l3 3-3 3-3-3z" fill="none" stroke="#444" /></svg> },
    { id: 'larghezza', label: 'Larghezza di stampa', value: 'Per livello' },
  ];
  return (
    <section className="flex flex-col border-t border-[#8a867e]">
      <PanelTitle title="Proprietà" />
      <div className={`mr-[2px] h-[13px] ${sunken}`}>
        <Combo id="tipo" value="Oggetto" label="Tipo di proprietà" />
      </div>
      <div className="mt-[3px] flex h-[12px] items-center pl-[2px]">
        <span className="w-[101px]">Tipo oggetto</span>
        <span>curva</span>
      </div>
      <div className="mr-[3px] ml-[5px] flex flex-col gap-px">
        <div className="flex h-[11px] gap-px">
          <label htmlFor="nome" className={labelCell}>Nome</label>
          <input id="nome" className="min-w-0 flex-1 bg-white outline-none" />
        </div>
        {combos.map((c) => (
          <div key={c.id} className="flex h-[11px] gap-px">
            <label htmlFor={c.id} className={labelCell}>{c.label}</label>
            <div className="min-w-0 flex-1"><Combo id={c.id} value={c.value} swatch={c.swatch} /></div>
          </div>
        ))}
      </div>
      <h3 className="flex h-[14px] items-center pl-[2px]">Impostazioni delle mesh di rendering</h3>
      <div className="mr-[3px] ml-[5px] flex flex-col gap-px">
        <div className="flex h-[11px] gap-px">
          <label htmlFor="mesh" className={labelCell}>Configura mesh</label>
          <div className="flex flex-1 items-center bg-white pl-[2px]">
            <input id="mesh" type="checkbox" checked={mesh} onChange={() => setMesh(!mesh)} className="size-[9px] appearance-none border border-t-[#606060] border-r-[#d4d0c8] border-b-[#d4d0c8] border-l-[#606060] bg-white" />
          </div>
        </div>
        <div className="flex h-[12px] gap-px text-[#8a8a8a]">
          <span className={labelCell}>Impostazioni</span>
          <button type="button" disabled className={`flex-1 leading-[9px] ${raised}`}>Regolare...</button>
        </div>
      </div>
      <h3 className="flex h-[14px] items-center pl-[2px]">Densità delle isocurve</h3>
      <div className="mr-[3px] ml-[5px] flex flex-col gap-px text-[#8a8a8a]">
        <div className="flex h-[11px] gap-px">
          <label htmlFor="densita" className={labelCell}>Densità</label>
          <input id="densita" disabled className="min-w-0 flex-1" />
          <span className="flex w-[11px] flex-col">
            <Arrow dir="up" className="h-[6px]" />
            <Arrow dir="down" className="h-[6px]" />
          </span>
        </div>
        <div className="flex h-[12px] gap-px">
          <span className={labelCell}>Mostra isocurva superficie</span>
          <label className="flex flex-1 items-center gap-[3px] pl-[2px]">
            <input type="checkbox" disabled className={`size-[9px] appearance-none ${sunken}`} />
            Visibile
          </label>
        </div>
      </div>
      <button type="button" className={`mr-[2px] mt-[2px] h-[14px] leading-[12px] ${raised}`}>Copia proprietà</button>
      <button type="button" className={`mr-[2px] mt-px h-[14px] leading-[12px] ${raised}`}>Dettagli...</button>
    </section>
  );
}

const snaps = [
  ['Fine', true], ['Vicino', true], ['Punto', true], ['Medio', true], ['Cen', true], ['Int', true],
  ['Perp', false], ['Tan', false], ['Quad', false], ['Nodo', false], ['Proietta', false], ['STrack', false], ['Disabilita', false],
] as const;

function SnapBar() {
  const [on, setOn] = useState(snaps.map((x) => x[1] as boolean));
  return (
    <div className="flex h-[15px] items-center border-t border-white pl-[2px]">
      <Grip />
      <div className="flex h-full w-[501px] items-center border-r border-[#8a867e]">
        {snaps.map(([label], i) => (
          <label key={label} className="flex w-[38px] shrink-0 items-center gap-[2px]">
            <span className="grid shrink-0">
              <input
                type="checkbox"
                checked={on[i]}
                onChange={() => setOn(on.map((v, j) => (j === i ? !v : v)))}
                className={i > 9 ? `col-start-1 row-start-1 size-[8px] appearance-none ${raised}` : 'col-start-1 row-start-1 size-[8px] appearance-none border border-t-[#555] border-r-[#eee] border-b-[#eee] border-l-[#555] bg-white'}
              />
              {on[i] && (
                <svg viewBox="0 0 8 8" className="pointer-events-none col-start-1 row-start-1 size-[8px]"><path d="M2 4l1.500 2L6.500 2" fill="none" stroke="#000" strokeWidth="1.400" /></svg>
              )}
            </span>
            {label}
          </label>
        ))}
      </div>
    </div>
  );
}

function StatusBar() {
  const cell = `flex h-[12px] items-center justify-center ${sunken}`;
  const toggled = `${cell} bg-[#f4f3f0] font-bold`;
  return (
    <div className="flex h-[14px] items-center gap-[2px] border-t border-[#b4b0a8]">
      <button type="button" className={`w-[34px] ${cell}`}>PianoC</button>
      <span className="w-[53px] pl-px">x -42.168</span>
      <span className="w-[53px]">y 572.504</span>
      <span className="w-[108px]">z 0.000</span>
      <button type="button" className={`w-[106px] ${cell} !justify-start`}><span className="size-[8px] bg-black" />09-088</button>
      <button type="button" className={`w-[33px] ${cell}`}>Snap</button>
      <button type="button" className={`w-[32px] ${toggled}`}>Orto</button>
      <button type="button" className={`w-[33px] ${toggled}`}>Planare</button>
      <button type="button" className={`w-[32px] ${toggled}`}>Osnap</button>
      <button type="button" className={`w-[65px] ${cell}`}>Registra storia</button>
    </div>
  );
}

const tasks = [
  ['firefox', 'come estruder...'],
  ['mill', 'PowerMILL Pro ...'],
  ['rhino', 'Anelli.3dm - ...'],
  ['folder', 'ncprograms'],
  ['folder', 'PartPrg (\\\\PC4...'],
  ['mill', 'PowerMILL Pro ...'],
  ['rhino', 'inserto aereazi...'],
];

function Taskbar() {
  return (
    <footer className="flex h-[16px] items-center border-t border-white px-px">
      <button type="button" className={`flex h-[13px] w-[33px] items-center font-bold ${raised}`}>
        <Icon name="windows" className="size-[10px]" />
        Start
      </button>
      <div className="ml-[2px] flex w-[104px] items-center justify-start">
        {['desktop', 'ie', 'outlook', 'rhino', 'mill', 'paint', 'firefox'].map((n) => (
          <button key={n} type="button" aria-label={n} className="flex flex-1 justify-center"><Icon name={n} className="size-[12px]" /></button>
        ))}
      </div>
      <div className="ml-[21px] flex min-w-0 flex-1 gap-[2px]">
        {tasks.map(([icon, label], i) => (
          <button key={i} type="button" className={`flex h-[13px] min-w-0 flex-1 items-center gap-px overflow-hidden pl-px whitespace-nowrap ${i === 2 ? `bg-[#f4f3f0] font-bold ${sunken}` : raised}`}>
            <Icon name={icon} className="size-[11px]" />
            {label}
          </button>
        ))}
      </div>
      <div className={`ml-[3px] flex h-[13px] w-[124px] items-center pl-px ${sunken}`}>
        {['msg', 'rhino', 'shield', 'green', 'net', 'teal', 'usb'].map((n) => (
          <span key={n} className="flex w-[11px] justify-center"><Icon name={n} className="size-[11px]" /></span>
        ))}
        <Icon name="sync" className="ml-[7px] size-[12px]" />
        <time className="ml-[5px]">14.30</time>
      </div>
    </footer>
  );
}

export default function App() {
  return (
    <div className="flex h-screen flex-col overflow-hidden bg-[#d4d0c8] font-['Liberation_Sans',sans-serif] text-[7px] leading-[9px] text-black">
      <TitleBar />
      <nav className="flex h-[13px] items-center gap-[6px] pl-[3px]">
        {menus.map((m) => (
          <button key={m} type="button">{m}</button>
        ))}
      </nav>
      <CommandArea />
      <div className="flex h-[19px] items-center border-t border-[#9a968e]">
        <Bar items={rowMain} className="w-[567px]" />
        <Bar items={rowGrid} className="w-[56px]" />
        <Bar items={rowFaces} className="w-[108px]" />
      </div>
      <div className="flex h-[18px] items-center border-t border-b border-t-[#b4b0a8] border-b-[#b4b0a8]">
        <Bar items={rowSurf} className="w-[426px] pr-[16px]" />
        <Bar items={rowDims} className="w-[335px]" />
      </div>
      <div className="flex min-h-0 flex-1">
        <SideBars />
        <Viewports />
        <aside className="ml-[3px] w-[207px] shrink-0 border-l border-white pl-[2px]">
          <LayersPanel />
          <PropsPanel />
        </aside>
      </div>
      <SnapBar />
      <StatusBar />
      <Taskbar />
    </div>
  );
}
